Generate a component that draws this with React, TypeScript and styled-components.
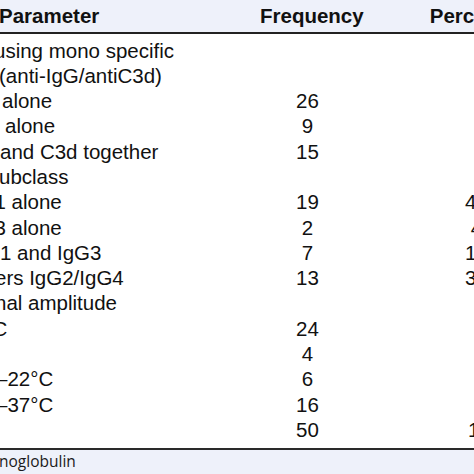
import styled, { createGlobalStyle } from "styled-components";

const GlobalStyle = createGlobalStyle`
    html, body {
        margin: 0;
        padding: 0;
        background: #fff;
        overflow: hidden;
    }
    #root {
        width: 474px;
        height: 474px;
        overflow: hidden;
    }
`;

// table is wider than the window, the right part is cut off like in the screenshot
const Table = styled.div`
    width: 613px;
    font-family: "Liberation Sans", Arial, sans-serif;
    color: #111;
`;

const Row = styled.div`
    display: grid;
    grid-template-columns: 260px 95px 258px;
    align-items: center;
`;

const HeadRow = styled(Row)`
    height: 32px;
    background: #eef1fa;
    border-bottom: 2px solid #222;
    font-weight: 700;
    font-size: 20.5px;
    line-height: 32px;
`;

const Body = styled.div`
    padding: 3.5px 0 5.7px;
    border-bottom: 2px solid #2a2a2a;
`;

const BodyRow = styled(Row)`
    height: 25.3px;
    font-size: 20.5px;
    line-height: 25.3px;
`;

interface LabelProps {
    $shift: number,
}
const Label = styled.div<LabelProps>`
    white-space: nowrap;
    text-indent: ${props => props.$shift}px;
`;

const Num = styled.div`
    text-align: center;
    white-space: nowrap;
`;

const Pct = styled.div`
    text-align: center;
    white-space: nowrap;
    padding-left: 2px;
`;

const Footer = styled.div`
    height: 24px;
    background: #eef1fa;
    font-family: "Open Sans", "Noto Sans", sans-serif;
    font-size: 15.5px;
    line-height: 21px;
    padding-top: 1.5px;
    box-sizing: border-box;
    text-indent: -1px;
    color: #1a1a1a;
`;

const rows = [
    { label: "using mono specific", shift: -6, freq: "", pct: "" },
    { label: "(anti-IgG/antiC3d)", shift: -1, freq: "", pct: "" },
    { label: "alone", shift: 2, freq: "26", pct: "" },
    { label: "alone", shift: 5, freq: "9", pct: "" },
    { label: "and C3d together", shift: 0, freq: "15", pct: "" },
    { label: "ubclass", shift: -1, freq: "", pct: "" },
    { label: "1 alone", shift: -5.5, freq: "19", pct: "46.3" },
    { label: "3 alone", shift: -5.5, freq: "2", pct: "4.9" },
    { label: "1 and IgG3", shift: 0, freq: "7", pct: "17.1" },
    { label: "ers IgG2/IgG4", shift: -5, freq: "13", pct: "31.7" },
    { label: "nal amplitude", shift: -5, freq: "", pct: "" },
    { label: "C", shift: -7.5, freq: "24", pct: "" },
    { label: "", shift: 0, freq: "4", pct: "" },
    { label: "\u201322°C", shift: -4, freq: "6", pct: "" },
    { label: "\u201337°C", shift: -4, freq: "16", pct: "" },
    { label: "", shift: 0, freq: "50", pct: "100" },
];

const App = () => {
  return (
    <>
        <GlobalStyle />
        <Table>
            <HeadRow>
                <Label $shift={-1}>Parameter</Label>
                <Num>Frequency</Num>
                <Pct>Percentage</Pct>
            </HeadRow>
            <Body>
                {rows.map((row, index) => {
                    return (
                        <BodyRow key={index}>
                            <Label $shift={row.shift}>{row.label}</Label>
                            <Num>{row.freq}</Num>
                            <Pct>{row.pct}</Pct>
                        </BodyRow>
                    );
                })}
            </Body>
            <Footer>noglobulin</Footer>
        </Table>
    </>
  );
}

export default App
